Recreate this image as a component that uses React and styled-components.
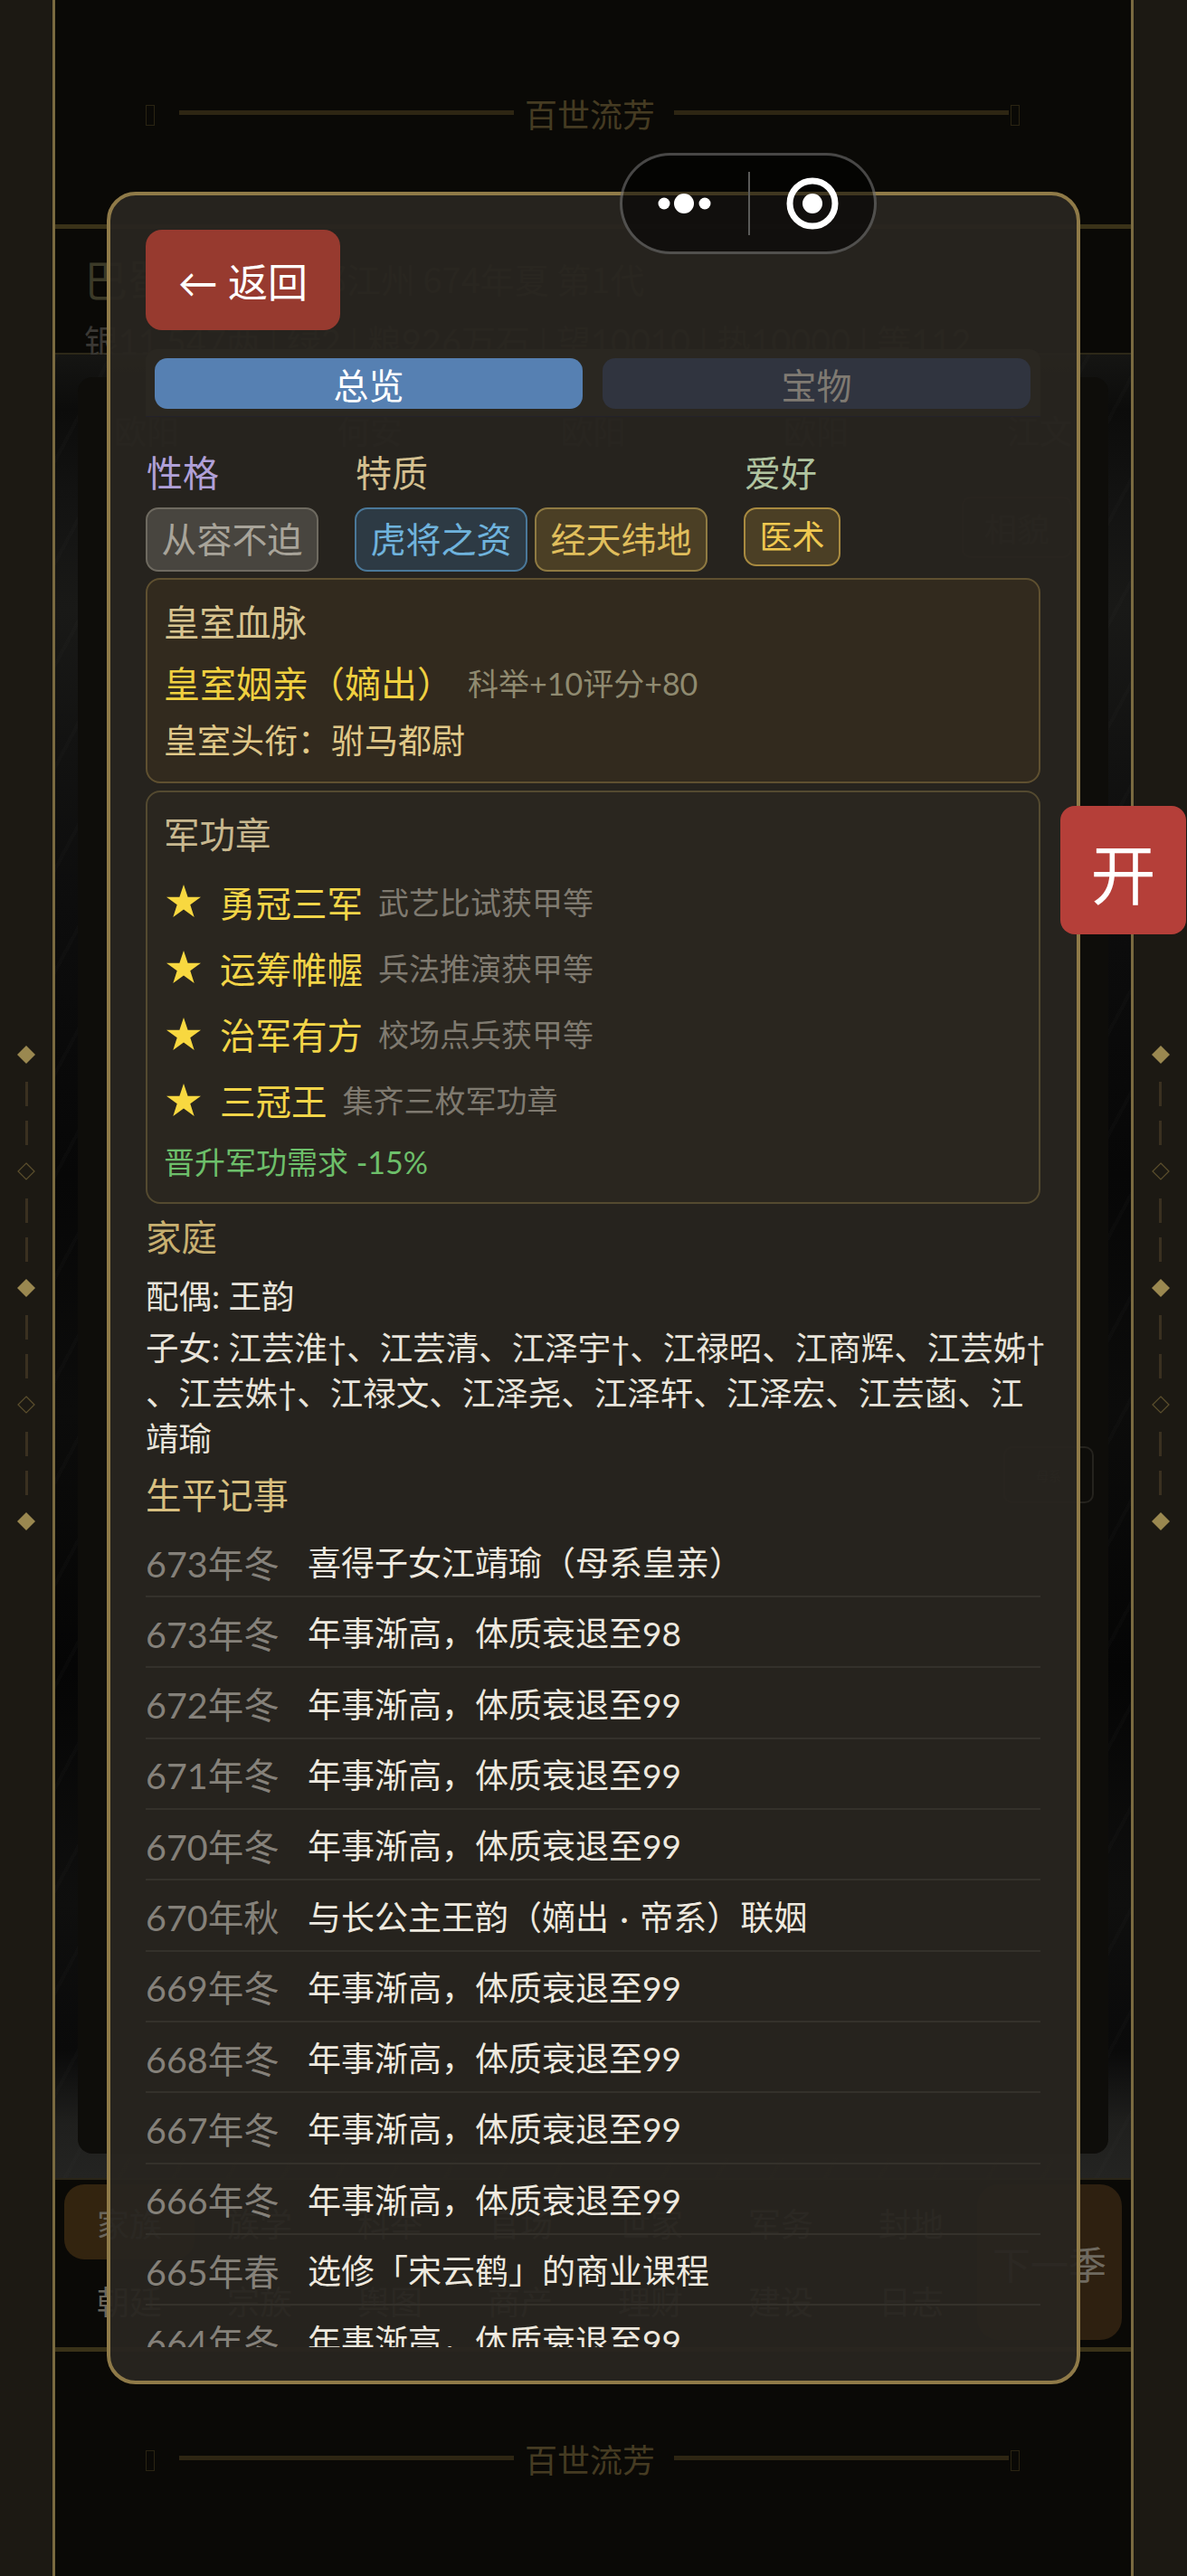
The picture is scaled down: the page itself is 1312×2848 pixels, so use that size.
import React from "react";
import styled, { createGlobalStyle } from "styled-components";

const Global = createGlobalStyle`
  html, body { margin: 0; padding: 0; background: #0a0906; }
  * { box-sizing: border-box; }
  body { font-family: Lato, "Noto Sans CJK SC", sans-serif; }
`;

const Page = styled.div`
  position: relative;
  width: 1312px;
  height: 2848px;
  overflow: hidden;
  display: flex;
  background: #0a0906;
`;

const Rail = styled.aside`
  width: ${(p) => p.$w}px;
  flex: none;
  background: #1c1913;
  display: flex;
  flex-direction: column;
  align-items: center;
  justify-content: center;
`;
const RailDash = styled.span`
  width: 3px;
  height: 27px;
  background: #3a3020;
  margin: 8px 0;
`;
const RailGem = styled.svg`
  width: 20px;
  height: 20px;
  display: block;
  margin: 11.5px 0;
`;

const Stage = styled.main`
  flex: 1;
  min-width: 0;
  overflow: hidden;
  display: flex;
  flex-direction: column;
  border-left: 3px solid #7a6a40;
  border-right: 3px solid #7a6a40;
`;

const Deco = styled.div`
  height: ${(p) => p.$h};
  flex: ${(p) => (p.$grow ? 1 : "none")};
  display: flex;
  align-items: flex-start;
  justify-content: center;
  gap: 12px;
  padding-top: ${(p) => p.$top}px;
  padding-right: 23px;
`;
const DecoText = styled.span`
  font-size: 36px;
  line-height: 50px;
  color: #453b22;
  margin-right: 9px;
  font-family: "Noto Sans CJK SC", sans-serif;
`;
const DecoLine = styled.span`
  width: 370px;
  height: 5px;
  margin-top: 22px;
  background: #2e2613;
`;
const DecoEnd = styled.span`
  width: 10px;
  height: 23px;
  margin-top: 16px;
  border: 1px solid #2a2412;
  margin-left: ${(p) => (p.$right ? "-10px" : "0")};
  margin-right: ${(p) => (p.$right ? "0" : "15px")};
`;
const GoldRule = styled.div`
  height: 5px;
  flex: none;
  background: #3a3218;
`;

const InfoBar = styled.section`
  height: 139px;
  flex: none;
  padding: 26px 32px 0;
  border-bottom: 2px solid #2d2818;
`;
const TitleRow = styled.div`
  display: flex;
  align-items: center;
  gap: 22px;
  height: 56px;
  color: #3c3a30;
  font-size: 38px;
  font-family: "Noto Sans CJK SC", sans-serif;
`;
const TitleName = styled.span`
  font-size: 48px;
  color: #3c3a28;
`;
const StatRow = styled.div`
  margin-top: 19px;
  font-size: 38px;
  line-height: 46px;
  color: #3a3834;
  white-space: nowrap;
`;

const Scene = styled.section`
  height: 2018px;
  flex: none;
  padding: 25px 25px 27px;
  border-bottom: 2px solid #2a2518;
  background:
    repeating-linear-gradient(118deg, rgba(60, 60, 58, 0.07) 0 4px, transparent 4px 53px),
    linear-gradient(
      180deg,
      #151513 0%,
      #0c0c0b 3%,
      #131312 8%,
      #191917 14%,
      #121211 22%,
      #0d0d0d 30%,
      #070707 45%,
      #0c0c0b 58%,
      #050505 72%,
      #0f0f0e 85%,
      #0a0a0a 93%,
      #1f1f1d 97%,
      #242422 100%
    );
`;
const ScenePanel = styled.div`
  height: 100%;
  border-radius: 16px;
  background: #0e0d0a;
  padding: 36px 40px;
`;
const FaintRow = styled.div`
  display: flex;
  justify-content: space-between;
  color: #34322c;
  font-size: 36px;
  line-height: 48px;
`;
const FaintCard = styled.div`
  width: ${(p) => p.$w}px;
  height: ${(p) => p.$h}px;
  margin: ${(p) => p.$m};
  border: 2px solid #25231e;
  border-radius: 10px;
  display: flex;
  align-items: center;
  justify-content: center;
  color: #34322c;
  font-size: ${(p) => p.$f}px;
`;

const NavBar = styled.nav`
  height: 185px;
  flex: none;
  display: flex;
  justify-content: space-between;
  padding: 5px 10px 8px;
`;
const NavGrid = styled.div`
  width: 1009px;
  display: grid;
  grid-template-columns: repeat(7, 144px);
  grid-template-rows: 83px 1fr;
`;
const NavItem = styled.div`
  display: flex;
  align-items: center;
  justify-content: center;
  font-size: 36px;
  color: #6a665c;
  border-radius: 22px;
  background: ${(p) => (p.$on ? "#33240f" : "transparent")};
`;
const NextBtn = styled.div`
  width: 160px;
  display: flex;
  align-items: center;
  justify-content: center;
  background: #2e2010;
  border-radius: 24px;
  font-size: 42px;
  color: #6f6a60;
`;

const Modal = styled.section`
  position: absolute;
  inset: 212px 118px;
  z-index: 5;
  display: flex;
  flex-direction: column;
  padding: 38px 40px 37px 39px;
  border: 4px solid #8f7a48;
  border-radius: 32px;
  background: rgba(40, 37, 32, 0.95);
  font-family: Lato, "Noto Sans CJK SC", sans-serif;
`;
const BackBtn = styled.button`
  width: 215px;
  height: 111px;
  flex: none;
  border: 0;
  border-radius: 18px;
  background: #973a2f;
  color: #fff;
  font: inherit;
  font-size: 44px;
  padding: 0;
`;
const TabBar = styled.div`
  margin-top: 21px;
  height: 75px;
  flex: none;
  display: grid;
  grid-template-columns: 1fr 1fr;
  gap: 22px;
  padding: 10px 11px 9px 10px;
  background: #2a2721;
  border-bottom: 1px solid #23222a;
  border-radius: 12px 12px 0 0;
`;
const Tab = styled.div`
  display: flex;
  align-items: center;
  justify-content: center;
  border-radius: 14px;
  font-size: 39px;
  background: ${(p) => (p.$on ? "#5680b2" : "#30343f")};
  color: ${(p) => (p.$on ? "#fff" : "#7f7a72")};
`;

const TraitRow = styled.div`
  margin-top: 39px;
  display: flex;
  gap: 40px;
  flex: none;
`;
const TraitCol = styled.div`
  display: flex;
  flex-direction: column;
  align-items: flex-start;
`;
const TraitLabel = styled.div`
  font-size: 40px;
  line-height: 46px;
  margin: 0 0 15px 1px;
  color: ${(p) => p.$c};
`;
const ChipRow = styled.div`
  display: flex;
  gap: 8px;
`;
const Chip = styled.span`
  display: block;
  height: ${(p) => (p.$small ? 65 : 71)}px;
  line-height: ${(p) => (p.$small ? 61 : 67)}px;
  padding: 0 15.5px;
  border: 2px solid ${(p) => p.$b};
  border-radius: 14px;
  background: ${(p) => p.$bg};
  color: ${(p) => p.$c};
  font-size: ${(p) => (p.$small ? 36 : 39)}px;
  white-space: nowrap;
`;

const Panel = styled.div`
  margin-top: ${(p) => p.$mt}px;
  flex: none;
  padding: 24px 19px ${(p) => p.$pb}px 18px;
  border: 2px solid ${(p) => p.$b};
  border-radius: 16px;
  background: ${(p) => p.$bg};
`;
const PanelTitle = styled.div`
  font-size: 39.5px;
  line-height: 46px;
  color: ${(p) => p.$c};
`;
const LineRow = styled.div`
  display: flex;
  align-items: center;
  height: 50px;
  margin-top: ${(p) => p.$mt}px;
  white-space: nowrap;
`;
const Royal = styled.span`
  font-size: 40px;
  color: #f0d040;
`;
const Hint = styled.span`
  font-size: 34px;
  margin-left: ${(p) => p.$ml}px;
  color: ${(p) => p.$c};
`;
const RoyalTitle = styled.span`
  font-size: 37px;
  color: #e0c888;
`;
const MedalStar = styled.svg`
  width: 38px;
  height: 36px;
  margin: 0 21px 0 3px;
  flex: none;
`;
const MedalName = styled.span`
  font-size: 39.5px;
  color: #f3d548;
`;
const BonusNote = styled.div`
  margin-top: 19px;
  font-size: 34px;
  line-height: 50px;
  color: #6dbf6a;
`;

const SectionTitle = styled.div`
  margin-top: ${(p) => p.$mt}px;
  flex: none;
  font-size: 39.5px;
  line-height: 46px;
  color: ${(p) => p.$c};
`;
const FamilyText = styled.div`
  margin-top: ${(p) => p.$mt}px;
  margin-right: -6px;
  flex: none;
  font-size: 36.5px;
  line-height: 50px;
  color: #e8e4da;
  line-break: anywhere;
`;
const Timeline = styled.div`
  margin-top: 12px;
  flex: 1;
  min-height: 0;
  overflow: hidden;
`;
const EventRow = styled.div`
  height: 78.3px;
  display: flex;
  align-items: center;
  border-bottom: 2px solid #34312b;
  white-space: nowrap;
`;
const EventYear = styled.span`
  width: 179px;
  flex: none;
  font-size: 39.5px;
  color: #85817a;
`;
const EventText = styled.span`
  font-size: 37px;
  color: #eee9df;
`;

const Capsule = styled.div`
  position: absolute;
  left: 685px;
  top: 169px;
  z-index: 10;
  width: 284px;
  height: 112px;
  display: flex;
  align-items: center;
  border: 3px solid rgba(255, 255, 255, 0.27);
  border-radius: 56px;
  background: rgba(0, 0, 0, 0.55);
`;
const CapsuleIcon = styled.svg`
  width: 139px;
  height: 70px;
  flex: none;
`;
const CapsuleDivider = styled.span`
  width: 2px;
  height: 70px;
  flex: none;
  background: #5a5a58;
`;

const SideTab = styled.div`
  position: absolute;
  left: 1172px;
  top: 891px;
  z-index: 8;
  width: 139px;
  height: 142px;
  display: flex;
  align-items: center;
  justify-content: center;
  border-radius: 16px;
  background: #b53f39;
  color: #fff;
  font-size: 72px;
  font-family: "Noto Sans CJK SC", sans-serif;
`;

const Gem = ({ filled }) => (
  <RailGem viewBox="0 0 20 20">
    {filled ? (
      <polygon points="10,0 20,10 10,20 0,10" fill="#9a8850" />
    ) : (
      <polygon points="10,1 19,10 10,19 1,10" fill="none" stroke="#5c4f2d" strokeWidth="1.2" />
    )}
  </RailGem>
);

const SideRail = ({ w }) => (
  <Rail $w={w}>
    {[true, false, true, false, true].map((f, i) => (
      <React.Fragment key={i}>
        <Gem filled={f} />
        {i < 4 && (
          <>
            <RailDash />
            <RailDash />
          </>
        )}
      </React.Fragment>
    ))}
  </Rail>
);

const DecoBand = ({ h, top, grow }) => (
  <Deco $h={h} $top={top} $grow={grow}>
    <DecoEnd />
    <DecoLine />
    <DecoText>百世流芳</DecoText>
    <DecoLine />
    <DecoEnd $right />
  </Deco>
);

const navTop = ["家族", "族学", "科举", "官场", "世家", "军务", "封地"];
const navBottom = ["朝廷", "宗族", "舆图", "商产", "理财", "建设", "日志"];
const medals = [
  ["勇冠三军", "武艺比试获甲等"],
  ["运筹帷幄", "兵法推演获甲等"],
  ["治军有方", "校场点兵获甲等"],
  ["三冠王", "集齐三枚军功章"],
];
const aged = "年事渐高，体质衰退至99";
const events = [
  ["673年冬", "喜得子女江靖瑜（母系皇亲）"],
  ["673年冬", "年事渐高，体质衰退至98"],
  ["672年冬", aged],
  ["671年冬", aged],
  ["670年冬", aged],
  ["670年秋", "与长公主王韵（嫡出\u2004·\u2004帝系）联姻"],
  ["669年冬", aged],
  ["668年冬", aged],
  ["667年冬", aged],
  ["666年冬", aged],
  ["665年春", "选修「宋云鹤」的商业课程"],
  ["664年冬", aged],
];

export default function App() {
  return (
    <Page>
      <Global />
      <SideRail w={58} />
      <Stage>
        <DecoBand h="248px" top={100} />
        <GoldRule />
        <InfoBar>
          <TitleRow>
            <TitleName>巴蜀江氏</TitleName>
            <span>巴郡江州 674年夏 第1代</span>
          </TitleRow>
          <StatRow>银11,547两 | 绿2 | 粮926万石 | 望10010 | 热10000 | 等112</StatRow>
        </InfoBar>
        <Scene>
          <ScenePanel>
            <FaintRow>
              <span>欧阳</span>
              <span>何安</span>
              <span>欧阳</span>
              <span>欧阳</span>
              <span>江文</span>
            </FaintRow>
            <FaintCard $w={122} $h={68} $m="48px 0 0 auto" $f={36}>相貌</FaintCard>
            <FaintCard $w={100} $h={63} $m="982px -24px 0 auto" $f={14}>母系</FaintCard>
          </ScenePanel>
        </Scene>
        <NavBar>
          <NavGrid>
            {navTop.map((n, i) => (
              <NavItem key={n} $on={i === 0}>{n}</NavItem>
            ))}
            {navBottom.map((n) => (
              <NavItem key={n}>{n}</NavItem>
            ))}
          </NavGrid>
          <NextBtn>下一季</NextBtn>
        </NavBar>
        <GoldRule />
        <DecoBand top={93} grow />
      </Stage>
      <SideRail w={59} />

      <Modal>
        <BackBtn>← 返回</BackBtn>
        <TabBar>
          <Tab $on>总览</Tab>
          <Tab>宝物</Tab>
        </TabBar>
        <TraitRow>
          <TraitCol>
            <TraitLabel $c="#b0a0d8">性格</TraitLabel>
            <ChipRow>
              <Chip $b="#6e6a60" $bg="#48453f" $c="#a8a49a">从容不迫</Chip>
            </ChipRow>
          </TraitCol>
          <TraitCol>
            <TraitLabel $c="#d4c090">特质</TraitLabel>
            <ChipRow>
              <Chip $b="#4a7899" $bg="#2d3a44" $c="#6fb3dd">虎将之资</Chip>
              <Chip $b="#8f7a42" $bg="#4b3f25" $c="#e0be5c">经天纬地</Chip>
            </ChipRow>
          </TraitCol>
          <TraitCol>
            <TraitLabel $c="#b0c4a0">爱好</TraitLabel>
            <ChipRow>
              <Chip $small $b="#a88a40" $bg="#4b3f25" $c="#f0c850">医术</Chip>
            </ChipRow>
          </TraitCol>
        </TraitRow>

        <Panel $mt={7} $pb={22} $b="#5f5030" $bg="#322a1e">
          <PanelTitle $c="#d8c48f">皇室血脉</PanelTitle>
          <LineRow $mt={18}>
            <Royal>皇室姻亲（嫡出）</Royal>
            <Hint $ml={16} $c="#8f8a70">科举+10评分+80</Hint>
          </LineRow>
          <LineRow $mt={13}>
            <RoyalTitle>皇室头衔：驸马都尉</RoyalTitle>
          </LineRow>
        </Panel>

        <Panel $mt={8} $pb={19} $b="#544a30" $bg="#2a261f">
          <PanelTitle $c="#c8b88f">军功章</PanelTitle>
          {medals.map(([name, desc], i) => (
            <LineRow key={name} $mt={i === 0 ? 25 : 23.3}>
              <MedalStar viewBox="0 0 38 36">
                <polygon
                  points="19,0 23.6,13.7 38,13.7 26.3,22.3 30.7,36 19,27.6 7.3,36 11.7,22.3 0,13.7 14.4,13.7"
                  fill="#f8d840"
                />
              </MedalStar>
              <MedalName>{name}</MedalName>
              <Hint $ml={17} $c="#7f7a70">{desc}</Hint>
            </LineRow>
          ))}
          <BonusNote>晋升军功需求 -15%</BonusNote>
        </Panel>

        <SectionTitle $mt={14} $c="#c8b070">家庭</SectionTitle>
        <FamilyText $mt={17}>配偶: 王韵</FamilyText>
        <FamilyText $mt={7}>
          子女: 江芸淮†、江芸清、江泽宇†、江禄昭、江商辉、江芸姊†、江芸姝†、江禄文、江泽尧、江泽轩、江泽宏、江芸菡、江靖瑜
        </FamilyText>
        <SectionTitle $mt={15} $c="#d8c080">生平记事</SectionTitle>
        <Timeline>
          {events.map(([y, t], i) => (
            <EventRow key={i}>
              <EventYear>{y}</EventYear>
              <EventText>{t}</EventText>
            </EventRow>
          ))}
        </Timeline>
      </Modal>

      <Capsule>
        <CapsuleIcon viewBox="0 0 139 70">
          <circle cx="46" cy="35" r="6.5" fill="#fff" />
          <circle cx="68" cy="35" r="11" fill="#fff" />
          <circle cx="91" cy="35" r="6.5" fill="#fff" />
        </CapsuleIcon>
        <CapsuleDivider />
        <CapsuleIcon viewBox="0 0 139 70">
          <circle cx="69" cy="35" r="25" fill="none" stroke="#fff" strokeWidth="7" />
          <circle cx="69" cy="35" r="11" fill="#fff" />
        </CapsuleIcon>
      </Capsule>
      <SideTab>开</SideTab>
    </Page>
  );
}
